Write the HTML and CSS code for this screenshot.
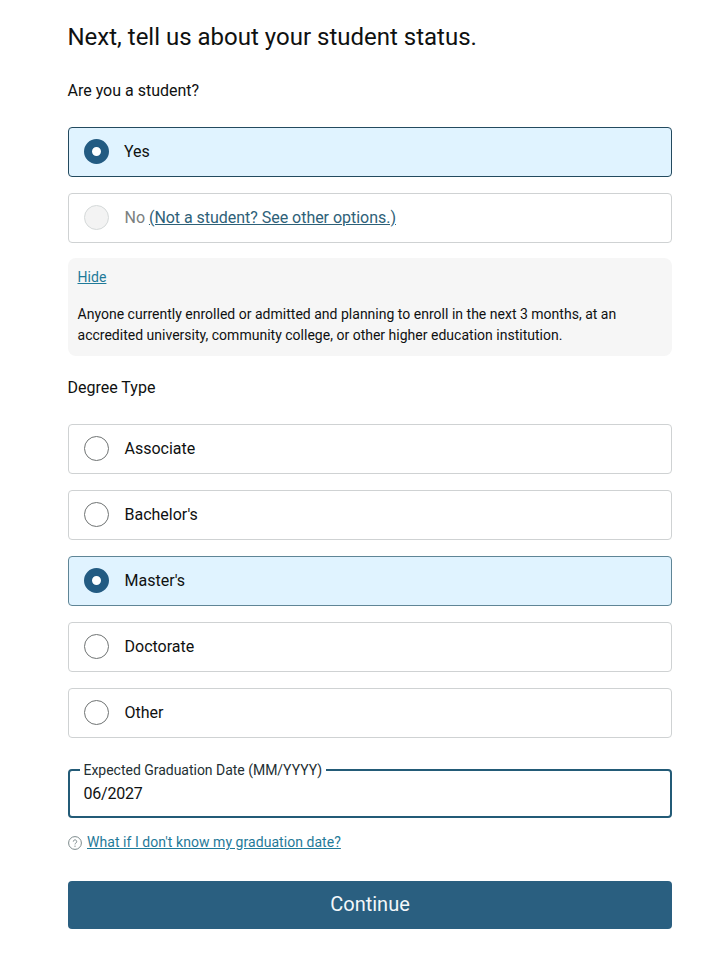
FILE: index.html
```html
<!DOCTYPE html>
<html lang="en">
<head>
<meta charset="utf-8">
<title>Student status</title>
<link rel="stylesheet" href="styles.css">
</head>
<body>
<main class="page">
  <h1 class="title">Next, tell us about your student status.</h1>
  <p class="question q-student">Are you a student?</p>
  <div class="options">
    <div class="option selected strong"><span class="radio on"></span><span class="label">Yes</span></div>
    <div class="option"><span class="radio disabled"></span><span class="label tight"><span class="muted">No</span> <a class="link-dark" href="#">(Not a student? See other options.)</a></span></div>
  </div>
  <section class="info">
    <a class="link small" href="#">Hide</a>
    <p class="info-text">Anyone currently enrolled or admitted and planning to enroll in the next 3 months, at an accredited university, community college, or other higher education institution.</p>
  </section>
  <p class="question q-degree">Degree Type</p>
  <div class="options">
    <div class="option"><span class="radio"></span><span class="label">Associate</span></div>
    <div class="option"><span class="radio"></span><span class="label">Bachelor's</span></div>
    <div class="option selected"><span class="radio on"></span><span class="label">Master's</span></div>
    <div class="option"><span class="radio"></span><span class="label">Doctorate</span></div>
    <div class="option"><span class="radio"></span><span class="label">Other</span></div>
  </div>
  <fieldset class="field">
    <legend class="legend">Expected Graduation Date (MM/YYYY)</legend>
    <div class="value">06/2027</div>
  </fieldset>
  <div class="help">
    <svg class="help-icon" viewBox="0 0 14 14" aria-hidden="true"><circle cx="7" cy="7" r="6.4" fill="none" stroke="#7d8a8c" stroke-width="1"/><path d="M5.3 5.6a1.7 1.7 0 1 1 2.6 1.4c-.6.4-.9.7-.9 1.4" fill="none" stroke="#7d8a8c" stroke-width="1"/><circle cx="7" cy="10.2" r=".65" fill="#7d8a8c"/></svg>
    <a class="link small" href="#">What if I don't know my graduation date?</a>
  </div>
  <button class="continue" type="button">Continue</button>
</main>
</body>
</html>
```
FILE: styles.css
```css
* { box-sizing: border-box; }
html, body { margin: 0; padding: 0; background: #fff; }
body { font-family: Roboto, "Noto Sans", sans-serif; color: #0f1111; }
.page { width: 723px; height: 954px; padding: 0 51px 0 68px; overflow: hidden; }
.title { margin: 0 0 0 -.5px; padding-top: 21px; font-size: 24px; line-height: 32px; font-weight: 400; }
.question { margin: 0; font-size: 16px; line-height: 22px; margin-left: -.5px; }
.q-student { margin-top: 27px; margin-bottom: 25px; }
.q-degree { margin-top: 21px; margin-bottom: 25px; }
.options { display: flex; flex-direction: column; gap: 16px; }
.option { height: 50px; display: flex; align-items: center; padding-left: 16px; gap: 16px; border: 1px solid #cfd2d3; border-radius: 4px; background: #fff; }
.option.selected { background: #e0f3ff; border-color: #5f8596; }
.option.strong { border-color: #234a5f; border-width: 1.5px; padding-left: 15.5px; }
.radio { width: 25px; height: 25px; margin-left: -1px; margin-top: -1px; flex: none; border-radius: 50%; border: 1.2px solid #6f7373; background: #fff; }
.radio.on { border: 8.5px solid #235b82; }
.radio.disabled { border-color: #d5d9d9; background: #f3f3f3; }
.label { font-size: 16px; line-height: 22px; margin-left: -.5px; }
.label.tight { letter-spacing: -.03px; }
.muted { color: #7b8080; }
.link-dark { color: #2e6178; }
.link { color: #1f7a99; }
.small { font-size: 14px; line-height: 20px; letter-spacing: .05px; }
.info { margin-top: 15px; height: 98px; padding: 9px 10px; background: #f6f6f6; border-radius: 8px; }
.info .link { display: block; margin-left: -.5px; }
.info-text { margin: 17px 0 0 -.5px; font-size: 14px; line-height: 21px; letter-spacing: .01px; }
.field { margin: 23px 0 0; padding: 0 9.5px; height: 57px; border: 2px solid #235b77; border-radius: 4px; }
.legend { padding: 0 4px; font-size: 14px; line-height: 18px; color: #232f33; letter-spacing: -.02px; }
.value { font-size: 16px; line-height: 22px; margin-top: 4px; margin-left: 4px; letter-spacing: -.2px; }
.help { margin-top: 14px; display: flex; align-items: center; gap: 5px; height: 20px; }
.help-icon { width: 14px; height: 14px; flex: none; margin-top: 2px; }
.continue { display: block; width: 100%; height: 48px; margin-top: 29px; padding-bottom: 3px; border: 0; border-radius: 4px; background: #2a5f80; color: #f4f8fa; font-family: inherit; font-size: 20px; }
```
